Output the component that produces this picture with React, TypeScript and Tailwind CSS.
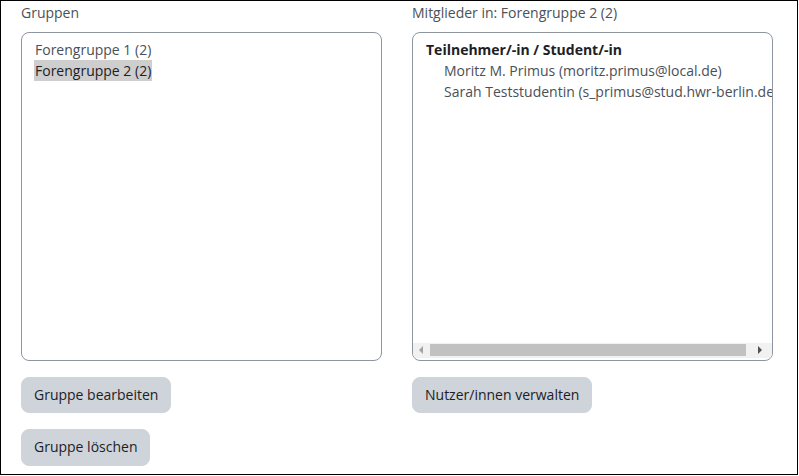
import React from 'react';

const font = { fontFamily: '"Open Sans", "Noto Sans", sans-serif' };

const Btn = ({ label }: { label: string }) => (
  <button className="rounded-lg bg-[#ced4da] px-3 py-[6px] text-[14px] leading-[22.5px] text-[#1d2125] border border-[#ced4da]">
    {label}
  </button>
);

const App: React.FC = () => {
  return (
    <div className="bg-white w-[799px] h-[476px]" style={font}>
      <div className="w-[798px] h-[475px] border border-black pl-5 pt-px">
        <div className="flex gap-[30px]">
          {/* Gruppen */}
          <div className="w-[361px] flex flex-col">
            <label className="text-[14px] leading-[22.5px] text-[#4b5157] mb-[7px]">Gruppen</label>
            <div className="h-[329px] border border-[#8f959e] rounded-lg px-3 py-[6px] text-[14px] text-[#495057]">
              <div className="h-[21px] leading-[21px] px-px w-fit">Forengruppe 1 (2)</div>
              <div className="h-[21px] leading-[21px] px-px w-fit bg-[#cecece] text-[#1d2125]">Forengruppe 2 (2)</div>
            </div>
            <div className="mt-4 flex flex-col items-start gap-4">
              <Btn label="Gruppe bearbeiten" />
              <Btn label="Gruppe löschen" />
            </div>
          </div>

          {/* Mitglieder */}
          <div className="w-[361px] flex flex-col">
            <label className="text-[14px] leading-[22.5px] text-[#4b5157] mb-[7px]">Mitglieder in: Forengruppe 2 (2)</label>
            <div className="h-[329px] border border-[#8f959e] rounded-lg flex flex-col overflow-hidden">
              <div className="flex-1 overflow-hidden px-3 py-[6px] text-[14px] whitespace-nowrap">
                <div className="h-[21px] leading-[21px] px-px font-bold text-[#1d2125]">Teilnehmer/-in / Student/-in</div>
                <div className="h-[21px] leading-[21px] pl-[19px] text-[#495057]">Moritz M. Primus (moritz.primus@local.de)</div>
                <div className="h-[21px] leading-[21px] pl-[19px] text-[#495057]">Sarah Teststudentin (s_primus@stud.hwr-berlin.de)</div>
              </div>
              {/* horizontal scrollbar */}
              <div className="h-[15px] mb-[2px] bg-[#f1f1f1] flex items-center">
                <div className="w-[17px] flex justify-center">
                  <svg width="5" height="8" viewBox="0 0 5 8"><path d="M4 0 L0 4 L4 8 Z" fill="#a3a3a3" /></svg>
                </div>
                <div className="w-[316px] h-[12px] bg-[#c1c1c1]" />
                <div className="flex-1 flex justify-center">
                  <svg width="5" height="8" viewBox="0 0 5 8"><path d="M1 0 L5 4 L1 8 Z" fill="#505050" /></svg>
                </div>
              </div>
            </div>
            <div className="mt-4 flex flex-col items-start">
              <Btn label="Nutzer/innen verwalten" />
            </div>
          </div>
        </div>
      </div>
    </div>
  );
};

export default App;
